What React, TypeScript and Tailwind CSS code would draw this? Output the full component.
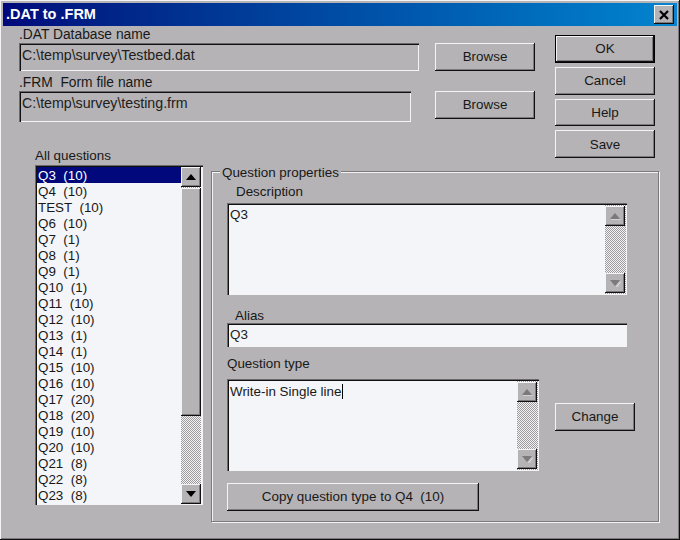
const questions = [
  'Q3  (10)', 'Q4  (10)', 'TEST  (10)', 'Q6  (10)', 'Q7  (1)', 'Q8  (1)', 'Q9  (1)', 'Q10  (1)',
  'Q11  (10)', 'Q12  (10)', 'Q13  (1)', 'Q14  (1)', 'Q15  (10)', 'Q16  (10)', 'Q17  (20)', 'Q18  (20)',
  'Q19  (10)', 'Q20  (10)', 'Q21  (8)', 'Q22  (8)', 'Q23  (8)',
];

const raised = 'shadow-[inset_-1px_-1px_0_#101010,inset_1px_1px_0_#f4f4f4,inset_-2px_-2px_0_#7b797b]';
const sunken = 'shadow-[inset_1px_1px_0_#6b696b,inset_2px_2px_0_#101010,inset_-1px_-1px_0_#f4f4f4]';
const dither = 'bg-[repeating-conic-gradient(#f4f4f4_0_25%,#9c9a9c_0_50%)] bg-[length:2px_2px]';

const Btn = ({ label, className = '' }: { label: string; className?: string }) => (
  <div className={`flex items-center justify-center bg-[#b5b3b5] text-[#181818] ${raised} ${className}`}>
    <span className="whitespace-pre">{label}</span>
  </div>
);

const Arrow = ({ dir, off }: { dir: 'up' | 'down'; off?: boolean }) => (
  <div className={`flex h-[20px] w-[20px] shrink-0 items-center justify-center bg-[#b5b3b5] ${raised}`}>
    <svg width="11" height="7" viewBox="0 0 11 7">
      {off && <path d={dir === 'up' ? 'M1 6.5H10.5V7H1z' : 'M6 7L10.5 1.5V2.5L7 7z'} fill="#f4f4f4" />}
      <path d={dir === 'up' ? 'M5 0L10 6H0z' : 'M0 0H10L5 6z'} fill={off ? '#7b797b' : '#000'} />
    </svg>
  </div>
);

const DisabledScroll = () => (
  <div className={`flex w-[21px] shrink-0 flex-col justify-between py-[1px] pr-[1px] ${dither}`}>
    <Arrow dir="up" off />
    <Arrow dir="down" off />
  </div>
);

const Field = ({ text, className = '' }: { text: string; className?: string }) => (
  <div className={`px-[3px] leading-[18px] text-[#202020] ${sunken} ${className}`}>{text}</div>
);

export default function App() {
  return (
    <div className="h-[540px] w-[680px] overflow-hidden bg-[#b5b3b5] p-[3px] font-['Liberation_Sans',Arial,sans-serif] text-[13.4px] text-[#181818] shadow-[inset_-1px_-1px_0_#101010,inset_1px_1px_0_#f4f4f4,inset_-2px_-2px_0_#7b797b]">
      <div className="flex h-[23px] items-center justify-between bg-gradient-to-r from-[#00087b] to-[#0a84ce] pl-[3px] pr-[3px]">
        <span className="text-[14.5px] font-bold text-white">.DAT to .FRM</span>
        <div className={`flex h-[19px] w-[20px] items-center justify-center bg-[#b5b3b5] ${raised}`}>
          <svg width="10" height="10" viewBox="0 0 10 10">
            <path d="M1 1L9 9M9 1L1 9" stroke="#000" strokeWidth="2.2" />
          </svg>
        </div>
      </div>

      <div className="flex h-[132px] pl-[16px]">
        <div className="w-[516px]">
          <div className="flex h-[45px] items-end justify-between">
            <div className="w-[400px]">
              <div className="h-[17px] text-[13.8px] leading-[18px]">.DAT Database name</div>
              <Field text="C:\temp\survey\Testbed.dat" className="h-[28px] pt-[3px] text-[14.2px]" />
            </div>
            <Btn label="Browse" className="h-[28px] w-[100px]" />
          </div>
          <div className="flex items-start justify-between pt-[3px]">
            <div className="w-[392px]">
              <div className="h-[17px] whitespace-pre text-[13.8px] leading-[18px]">.FRM  Form file name</div>
              <Field text="C:\temp\survey\testing.frm" className="h-[31px] pt-[3px] text-[14.2px]" />
            </div>
            <Btn label="Browse" className="mt-[17px] h-[28px] w-[100px]" />
          </div>
        </div>
        <div className="ml-[20px] flex w-[100px] flex-col gap-[4px] pt-[9px]">
          <Btn label="OK" className="h-[28px] border border-black" />
          <Btn label="Cancel" className="h-[28px]" />
          <Btn label="Help" className="h-[28px] pt-[1px]" />
          <Btn label="Save" className="h-[28px] pt-[1px]" />
        </div>
      </div>

      <div className="flex items-start pl-[32px]">
        <div className="-mt-[10px] w-[168px]">
          <div className="h-[17px] leading-[15px]">All questions</div>
          <div className={`flex h-[340px] bg-[#f4f5f8] p-[2px] pb-[1px] ${sunken}`}>
            <div className="flex-1 overflow-hidden">
              {questions.map((q, i) => (
                <div
                  key={q}
                  className={`h-[16px] whitespace-pre pl-[1px] leading-[17px] text-[#181818] ${i === 0 ? 'bg-[#00087b] !text-white' : ''}`}
                >
                  {q}
                </div>
              ))}
            </div>
            <div className={`flex w-[20px] shrink-0 flex-col ${dither}`}>
              <Arrow dir="up" />
              <div className={`mt-[1px] h-[228px] bg-[#b5b3b5] ${raised}`} />
              <div className="flex-1" />
              <Arrow dir="down" />
            </div>
          </div>
        </div>

        <div className="relative ml-[8px] mt-[13px] h-[351px] w-[448px] border border-[#7b797b] px-[15px] shadow-[1px_1px_0_#f4f4f4,inset_1px_1px_0_#f4f4f4]">
          <div className="absolute -top-[7px] left-[8px] bg-[#b5b3b5] px-[2px] leading-[16px]">Question properties</div>
          <div className="h-[31px] pl-[9px] pt-[11px] leading-[18px]">Description</div>
          <div className={`flex h-[92px] w-[400px] bg-[#f4f5f8] p-[2px] pb-[1px] pr-[1px] ${sunken}`}>
            <div className="flex-1 px-[1px] pt-[1px] leading-[18px]">Q3</div>
            <DisabledScroll />
          </div>
          <div className="h-[28px] pl-[8px] pt-[12px] leading-[18px]">Alias</div>
          <Field text="Q3" className="h-[24px] w-[400px] bg-[#f4f5f8] pt-[3px]" />
          <div className="h-[32px] pt-[8px] leading-[18px]">Question type</div>
          <div className="flex items-start">
            <div className={`flex h-[92px] w-[312px] bg-[#f4f5f8] p-[2px] pb-[1px] pr-[1px] ${sunken}`}>
              <div className="flex flex-1 items-start px-[1px] pt-[2px] leading-[18px]">
                Write-in Single line
                <span className="ml-[1px] mt-[1px] h-[15px] w-[1px] bg-black" />
              </div>
              <DisabledScroll />
            </div>
            <Btn label="Change" className="ml-[16px] mt-[24px] h-[28px] w-[80px]" />
          </div>
          <Btn label="Copy question type to Q4  (10)" className="mt-[12px] h-[28px] w-[252px]" />
        </div>
      </div>
    </div>
  );
}
